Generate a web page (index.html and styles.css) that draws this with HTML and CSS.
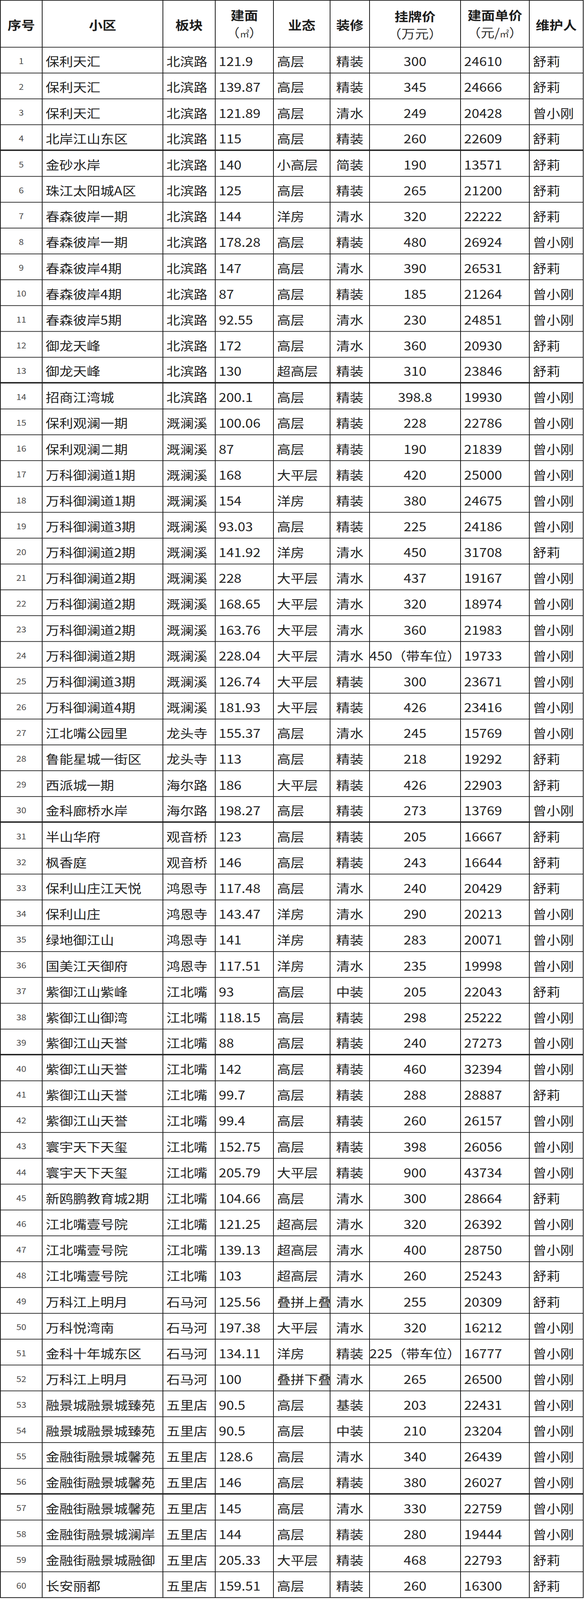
FILE: index.html
```html
<!DOCTYPE html>
<html lang="zh-CN">
<head>
<meta charset="utf-8">
<title>房源表</title>
<link rel="stylesheet" href="styles.css">
</head>
<body>
<div class="page">
<div class="sheet">
<div class="row head">
<div class="cell">序号</div><div class="cell">小区</div><div class="cell">板块</div><div class="cell"><span>建面</span><span class="sub">（<span class="sq">㎡</span>）</span></div><div class="cell">业态</div><div class="cell">装修</div><div class="cell"><span>挂牌价</span><span class="sub">（万元）</span></div><div class="cell"><span>建面单价</span><span class="sub">（元/<span class="sq">㎡</span>）</span></div><div class="cell">维护人</div>
</div>
<div class="row"><div class="cell n">1</div><div class="cell">保利天汇</div><div class="cell">北滨路</div><div class="cell">121.9</div><div class="cell">高层</div><div class="cell c">精装</div><div class="cell c">300</div><div class="cell">24610</div><div class="cell">舒莉</div></div>
<div class="row"><div class="cell n">2</div><div class="cell">保利天汇</div><div class="cell">北滨路</div><div class="cell">139.87</div><div class="cell">高层</div><div class="cell c">精装</div><div class="cell c">345</div><div class="cell">24666</div><div class="cell">舒莉</div></div>
<div class="row"><div class="cell n">3</div><div class="cell">保利天汇</div><div class="cell">北滨路</div><div class="cell">121.89</div><div class="cell">高层</div><div class="cell c">清水</div><div class="cell c">249</div><div class="cell">20428</div><div class="cell">曾小刚</div></div>
<div class="row sep"><div class="cell n">4</div><div class="cell">北岸江山东区</div><div class="cell">北滨路</div><div class="cell">115</div><div class="cell">高层</div><div class="cell c">精装</div><div class="cell c">260</div><div class="cell">22609</div><div class="cell">舒莉</div></div>
<div class="row"><div class="cell n">5</div><div class="cell">金砂水岸</div><div class="cell">北滨路</div><div class="cell">140</div><div class="cell">小高层</div><div class="cell c">简装</div><div class="cell c">190</div><div class="cell">13571</div><div class="cell">舒莉</div></div>
<div class="row"><div class="cell n">6</div><div class="cell">珠江太阳城A区</div><div class="cell">北滨路</div><div class="cell">125</div><div class="cell">高层</div><div class="cell c">精装</div><div class="cell c">265</div><div class="cell">21200</div><div class="cell">舒莉</div></div>
<div class="row"><div class="cell n">7</div><div class="cell">春森彼岸一期</div><div class="cell">北滨路</div><div class="cell">144</div><div class="cell">洋房</div><div class="cell c">清水</div><div class="cell c">320</div><div class="cell">22222</div><div class="cell">舒莉</div></div>
<div class="row"><div class="cell n">8</div><div class="cell">春森彼岸一期</div><div class="cell">北滨路</div><div class="cell">178.28</div><div class="cell">高层</div><div class="cell c">精装</div><div class="cell c">480</div><div class="cell">26924</div><div class="cell">曾小刚</div></div>
<div class="row"><div class="cell n">9</div><div class="cell">春森彼岸4期</div><div class="cell">北滨路</div><div class="cell">147</div><div class="cell">高层</div><div class="cell c">清水</div><div class="cell c">390</div><div class="cell">26531</div><div class="cell">舒莉</div></div>
<div class="row"><div class="cell n">10</div><div class="cell">春森彼岸4期</div><div class="cell">北滨路</div><div class="cell">87</div><div class="cell">高层</div><div class="cell c">精装</div><div class="cell c">185</div><div class="cell">21264</div><div class="cell">曾小刚</div></div>
<div class="row"><div class="cell n">11</div><div class="cell">春森彼岸5期</div><div class="cell">北滨路</div><div class="cell">92.55</div><div class="cell">高层</div><div class="cell c">清水</div><div class="cell c">230</div><div class="cell">24851</div><div class="cell">曾小刚</div></div>
<div class="row"><div class="cell n">12</div><div class="cell">御龙天峰</div><div class="cell">北滨路</div><div class="cell">172</div><div class="cell">高层</div><div class="cell c">清水</div><div class="cell c">360</div><div class="cell">20930</div><div class="cell">舒莉</div></div>
<div class="row sep"><div class="cell n">13</div><div class="cell">御龙天峰</div><div class="cell">北滨路</div><div class="cell">130</div><div class="cell">超高层</div><div class="cell c">精装</div><div class="cell c">310</div><div class="cell">23846</div><div class="cell">舒莉</div></div>
<div class="row"><div class="cell n">14</div><div class="cell">招商江湾城</div><div class="cell">北滨路</div><div class="cell">200.1</div><div class="cell">高层</div><div class="cell c">精装</div><div class="cell c">398.8</div><div class="cell">19930</div><div class="cell">曾小刚</div></div>
<div class="row"><div class="cell n">15</div><div class="cell">保利观澜一期</div><div class="cell">溉澜溪</div><div class="cell">100.06</div><div class="cell">高层</div><div class="cell c">精装</div><div class="cell c">228</div><div class="cell">22786</div><div class="cell">曾小刚</div></div>
<div class="row"><div class="cell n">16</div><div class="cell">保利观澜二期</div><div class="cell">溉澜溪</div><div class="cell">87</div><div class="cell">高层</div><div class="cell c">精装</div><div class="cell c">190</div><div class="cell">21839</div><div class="cell">曾小刚</div></div>
<div class="row"><div class="cell n">17</div><div class="cell">万科御澜道1期</div><div class="cell">溉澜溪</div><div class="cell">168</div><div class="cell">大平层</div><div class="cell c">精装</div><div class="cell c">420</div><div class="cell">25000</div><div class="cell">曾小刚</div></div>
<div class="row"><div class="cell n">18</div><div class="cell">万科御澜道1期</div><div class="cell">溉澜溪</div><div class="cell">154</div><div class="cell">洋房</div><div class="cell c">精装</div><div class="cell c">380</div><div class="cell">24675</div><div class="cell">曾小刚</div></div>
<div class="row"><div class="cell n">19</div><div class="cell">万科御澜道3期</div><div class="cell">溉澜溪</div><div class="cell">93.03</div><div class="cell">高层</div><div class="cell c">精装</div><div class="cell c">225</div><div class="cell">24186</div><div class="cell">曾小刚</div></div>
<div class="row"><div class="cell n">20</div><div class="cell">万科御澜道2期</div><div class="cell">溉澜溪</div><div class="cell">141.92</div><div class="cell">洋房</div><div class="cell c">清水</div><div class="cell c">450</div><div class="cell">31708</div><div class="cell">舒莉</div></div>
<div class="row"><div class="cell n">21</div><div class="cell">万科御澜道2期</div><div class="cell">溉澜溪</div><div class="cell">228</div><div class="cell">大平层</div><div class="cell c">清水</div><div class="cell c">437</div><div class="cell">19167</div><div class="cell">曾小刚</div></div>
<div class="row"><div class="cell n">22</div><div class="cell">万科御澜道2期</div><div class="cell">溉澜溪</div><div class="cell">168.65</div><div class="cell">大平层</div><div class="cell c">清水</div><div class="cell c">320</div><div class="cell">18974</div><div class="cell">曾小刚</div></div>
<div class="row"><div class="cell n">23</div><div class="cell">万科御澜道2期</div><div class="cell">溉澜溪</div><div class="cell">163.76</div><div class="cell">大平层</div><div class="cell c">清水</div><div class="cell c">360</div><div class="cell">21983</div><div class="cell">曾小刚</div></div>
<div class="row"><div class="cell n">24</div><div class="cell">万科御澜道2期</div><div class="cell">溉澜溪</div><div class="cell">228.04</div><div class="cell">大平层</div><div class="cell c">清水</div><div class="cell c">450（带车位）</div><div class="cell">19733</div><div class="cell">曾小刚</div></div>
<div class="row"><div class="cell n">25</div><div class="cell">万科御澜道3期</div><div class="cell">溉澜溪</div><div class="cell">126.74</div><div class="cell">大平层</div><div class="cell c">精装</div><div class="cell c">300</div><div class="cell">23671</div><div class="cell">曾小刚</div></div>
<div class="row"><div class="cell n">26</div><div class="cell">万科御澜道4期</div><div class="cell">溉澜溪</div><div class="cell">181.93</div><div class="cell">大平层</div><div class="cell c">精装</div><div class="cell c">426</div><div class="cell">23416</div><div class="cell">曾小刚</div></div>
<div class="row"><div class="cell n">27</div><div class="cell">江北嘴公园里</div><div class="cell">龙头寺</div><div class="cell">155.37</div><div class="cell">高层</div><div class="cell c">清水</div><div class="cell c">245</div><div class="cell">15769</div><div class="cell">曾小刚</div></div>
<div class="row"><div class="cell n">28</div><div class="cell">鲁能星城一街区</div><div class="cell">龙头寺</div><div class="cell">113</div><div class="cell">高层</div><div class="cell c">精装</div><div class="cell c">218</div><div class="cell">19292</div><div class="cell">舒莉</div></div>
<div class="row"><div class="cell n">29</div><div class="cell">西派城一期</div><div class="cell">海尔路</div><div class="cell">186</div><div class="cell">大平层</div><div class="cell c">精装</div><div class="cell c">426</div><div class="cell">22903</div><div class="cell">舒莉</div></div>
<div class="row sep"><div class="cell n">30</div><div class="cell">金科廊桥水岸</div><div class="cell">海尔路</div><div class="cell">198.27</div><div class="cell">高层</div><div class="cell c">精装</div><div class="cell c">273</div><div class="cell">13769</div><div class="cell">曾小刚</div></div>
<div class="row"><div class="cell n">31</div><div class="cell">半山华府</div><div class="cell">观音桥</div><div class="cell">123</div><div class="cell">高层</div><div class="cell c">精装</div><div class="cell c">205</div><div class="cell">16667</div><div class="cell">舒莉</div></div>
<div class="row"><div class="cell n">32</div><div class="cell">枫香庭</div><div class="cell">观音桥</div><div class="cell">146</div><div class="cell">高层</div><div class="cell c">精装</div><div class="cell c">243</div><div class="cell">16644</div><div class="cell">舒莉</div></div>
<div class="row"><div class="cell n">33</div><div class="cell">保利山庄江天悦</div><div class="cell">鸿恩寺</div><div class="cell">117.48</div><div class="cell">高层</div><div class="cell c">清水</div><div class="cell c">240</div><div class="cell">20429</div><div class="cell">舒莉</div></div>
<div class="row"><div class="cell n">34</div><div class="cell">保利山庄</div><div class="cell">鸿恩寺</div><div class="cell">143.47</div><div class="cell">洋房</div><div class="cell c">清水</div><div class="cell c">290</div><div class="cell">20213</div><div class="cell">曾小刚</div></div>
<div class="row"><div class="cell n">35</div><div class="cell">绿地御江山</div><div class="cell">鸿恩寺</div><div class="cell">141</div><div class="cell">洋房</div><div class="cell c">精装</div><div class="cell c">283</div><div class="cell">20071</div><div class="cell">曾小刚</div></div>
<div class="row"><div class="cell n">36</div><div class="cell">国美江天御府</div><div class="cell">鸿恩寺</div><div class="cell">117.51</div><div class="cell">洋房</div><div class="cell c">清水</div><div class="cell c">235</div><div class="cell">19998</div><div class="cell">曾小刚</div></div>
<div class="row"><div class="cell n">37</div><div class="cell">紫御江山紫峰</div><div class="cell">江北嘴</div><div class="cell">93</div><div class="cell">高层</div><div class="cell c">中装</div><div class="cell c">205</div><div class="cell">22043</div><div class="cell">舒莉</div></div>
<div class="row"><div class="cell n">38</div><div class="cell">紫御江山御湾</div><div class="cell">江北嘴</div><div class="cell">118.15</div><div class="cell">高层</div><div class="cell c">精装</div><div class="cell c">298</div><div class="cell">25222</div><div class="cell">曾小刚</div></div>
<div class="row sep"><div class="cell n">39</div><div class="cell">紫御江山天誉</div><div class="cell">江北嘴</div><div class="cell">88</div><div class="cell">高层</div><div class="cell c">精装</div><div class="cell c">240</div><div class="cell">27273</div><div class="cell">曾小刚</div></div>
<div class="row"><div class="cell n">40</div><div class="cell">紫御江山天誉</div><div class="cell">江北嘴</div><div class="cell">142</div><div class="cell">高层</div><div class="cell c">精装</div><div class="cell c">460</div><div class="cell">32394</div><div class="cell">曾小刚</div></div>
<div class="row"><div class="cell n">41</div><div class="cell">紫御江山天誉</div><div class="cell">江北嘴</div><div class="cell">99.7</div><div class="cell">高层</div><div class="cell c">精装</div><div class="cell c">288</div><div class="cell">28887</div><div class="cell">舒莉</div></div>
<div class="row"><div class="cell n">42</div><div class="cell">紫御江山天誉</div><div class="cell">江北嘴</div><div class="cell">99.4</div><div class="cell">高层</div><div class="cell c">精装</div><div class="cell c">260</div><div class="cell">26157</div><div class="cell">曾小刚</div></div>
<div class="row"><div class="cell n">43</div><div class="cell">寰宇天下天玺</div><div class="cell">江北嘴</div><div class="cell">152.75</div><div class="cell">高层</div><div class="cell c">精装</div><div class="cell c">398</div><div class="cell">26056</div><div class="cell">曾小刚</div></div>
<div class="row"><div class="cell n">44</div><div class="cell">寰宇天下天玺</div><div class="cell">江北嘴</div><div class="cell">205.79</div><div class="cell">大平层</div><div class="cell c">精装</div><div class="cell c">900</div><div class="cell">43734</div><div class="cell">曾小刚</div></div>
<div class="row"><div class="cell n">45</div><div class="cell">新鸥鹏教育城2期</div><div class="cell">江北嘴</div><div class="cell">104.66</div><div class="cell">高层</div><div class="cell c">清水</div><div class="cell c">300</div><div class="cell">28664</div><div class="cell">舒莉</div></div>
<div class="row"><div class="cell n">46</div><div class="cell">江北嘴壹号院</div><div class="cell">江北嘴</div><div class="cell">121.25</div><div class="cell">超高层</div><div class="cell c">清水</div><div class="cell c">320</div><div class="cell">26392</div><div class="cell">曾小刚</div></div>
<div class="row"><div class="cell n">47</div><div class="cell">江北嘴壹号院</div><div class="cell">江北嘴</div><div class="cell">139.13</div><div class="cell">超高层</div><div class="cell c">清水</div><div class="cell c">400</div><div class="cell">28750</div><div class="cell">曾小刚</div></div>
<div class="row"><div class="cell n">48</div><div class="cell">江北嘴壹号院</div><div class="cell">江北嘴</div><div class="cell">103</div><div class="cell">超高层</div><div class="cell c">清水</div><div class="cell c">260</div><div class="cell">25243</div><div class="cell">舒莉</div></div>
<div class="row"><div class="cell n">49</div><div class="cell">万科江上明月</div><div class="cell">石马河</div><div class="cell">125.56</div><div class="cell">叠拼上叠</div><div class="cell c">清水</div><div class="cell c">255</div><div class="cell">20309</div><div class="cell">舒莉</div></div>
<div class="row"><div class="cell n">50</div><div class="cell">万科悦湾南</div><div class="cell">石马河</div><div class="cell">197.38</div><div class="cell">大平层</div><div class="cell c">清水</div><div class="cell c">320</div><div class="cell">16212</div><div class="cell">曾小刚</div></div>
<div class="row"><div class="cell n">51</div><div class="cell">金科十年城东区</div><div class="cell">石马河</div><div class="cell">134.11</div><div class="cell">洋房</div><div class="cell c">精装</div><div class="cell c">225（带车位）</div><div class="cell">16777</div><div class="cell">曾小刚</div></div>
<div class="row"><div class="cell n">52</div><div class="cell">万科江上明月</div><div class="cell">石马河</div><div class="cell">100</div><div class="cell">叠拼下叠</div><div class="cell c">清水</div><div class="cell c">265</div><div class="cell">26500</div><div class="cell">曾小刚</div></div>
<div class="row"><div class="cell n">53</div><div class="cell">融景城融景城臻苑</div><div class="cell">五里店</div><div class="cell">90.5</div><div class="cell">高层</div><div class="cell c">基装</div><div class="cell c">203</div><div class="cell">22431</div><div class="cell">曾小刚</div></div>
<div class="row"><div class="cell n">54</div><div class="cell">融景城融景城臻苑</div><div class="cell">五里店</div><div class="cell">90.5</div><div class="cell">高层</div><div class="cell c">中装</div><div class="cell c">210</div><div class="cell">23204</div><div class="cell">曾小刚</div></div>
<div class="row"><div class="cell n">55</div><div class="cell">金融街融景城馨苑</div><div class="cell">五里店</div><div class="cell">128.6</div><div class="cell">高层</div><div class="cell c">清水</div><div class="cell c">340</div><div class="cell">26439</div><div class="cell">曾小刚</div></div>
<div class="row sep"><div class="cell n">56</div><div class="cell">金融街融景城馨苑</div><div class="cell">五里店</div><div class="cell">146</div><div class="cell">高层</div><div class="cell c">精装</div><div class="cell c">380</div><div class="cell">26027</div><div class="cell">曾小刚</div></div>
<div class="row"><div class="cell n">57</div><div class="cell">金融街融景城馨苑</div><div class="cell">五里店</div><div class="cell">145</div><div class="cell">高层</div><div class="cell c">清水</div><div class="cell c">330</div><div class="cell">22759</div><div class="cell">曾小刚</div></div>
<div class="row"><div class="cell n">58</div><div class="cell">金融街融景城澜岸</div><div class="cell">五里店</div><div class="cell">144</div><div class="cell">高层</div><div class="cell c">精装</div><div class="cell c">280</div><div class="cell">19444</div><div class="cell">曾小刚</div></div>
<div class="row"><div class="cell n">59</div><div class="cell">金融街融景城融御</div><div class="cell">五里店</div><div class="cell">205.33</div><div class="cell">大平层</div><div class="cell c">精装</div><div class="cell c">468</div><div class="cell">22793</div><div class="cell">舒莉</div></div>
<div class="row"><div class="cell n">60</div><div class="cell">长安丽都</div><div class="cell">五里店</div><div class="cell">159.51</div><div class="cell">高层</div><div class="cell c">精装</div><div class="cell c">260</div><div class="cell">16300</div><div class="cell">舒莉</div></div>
</div>
</div>
</body>
</html>
```

FILE: styles.css
```css
html, body {
  margin: 0;
  padding: 0;
  background: #ffffff;
}

body {
  font-family: "Noto Sans CJK SC", "Noto Sans", sans-serif;
  color: #222222;
}

/* The capture is 4096px tall; the sheet is drawn at the reference's
   proportions and fitted to that height. */
.page {
  height: 4096px;
  overflow: hidden;
}

.sheet {
  display: flex;
  flex-direction: column;
  gap: 2px;
  width: 1490px;
  border: 2px solid #1c1c1c;
  background: #1c1c1c;
  transform: scaleY(0.882);
  transform-origin: 0 0;
}

.row {
  display: grid;
  grid-template-columns: 105px 307px 132px 147px 143px 99px 231px 174px 136px;
  column-gap: 2px;
  height: 73px;
}

.row.head {
  height: 134px;
}

.row.sep {
  height: 71px;
  margin-bottom: 2px;
}

.cell {
  display: flex;
  align-items: center;
  justify-content: flex-start;
  background: #ffffff;
  padding: 4px 0 0 8px;
  overflow: hidden;
  white-space: nowrap;
  font-size: 35px;
  line-height: 1;
  min-width: 0;
}

.cell.n {
  justify-content: center;
  padding-left: 0;
  font-size: 23px;
  color: #4a4a4a;
}

.cell.c {
  justify-content: center;
  padding-left: 0;
}

.head .cell {
  flex-direction: column;
  justify-content: center;
  align-items: center;
  padding: 4px 0 0 0;
  font-weight: 700;
  line-height: 50px;
  color: #1e1e1e;
}

.head .cell .sub {
  font-weight: 400;
  color: #333333;
}

.head .cell .sq {
  font-family: "Liberation Serif", "DejaVu Serif", serif;
  font-size: 24px;
}
```
